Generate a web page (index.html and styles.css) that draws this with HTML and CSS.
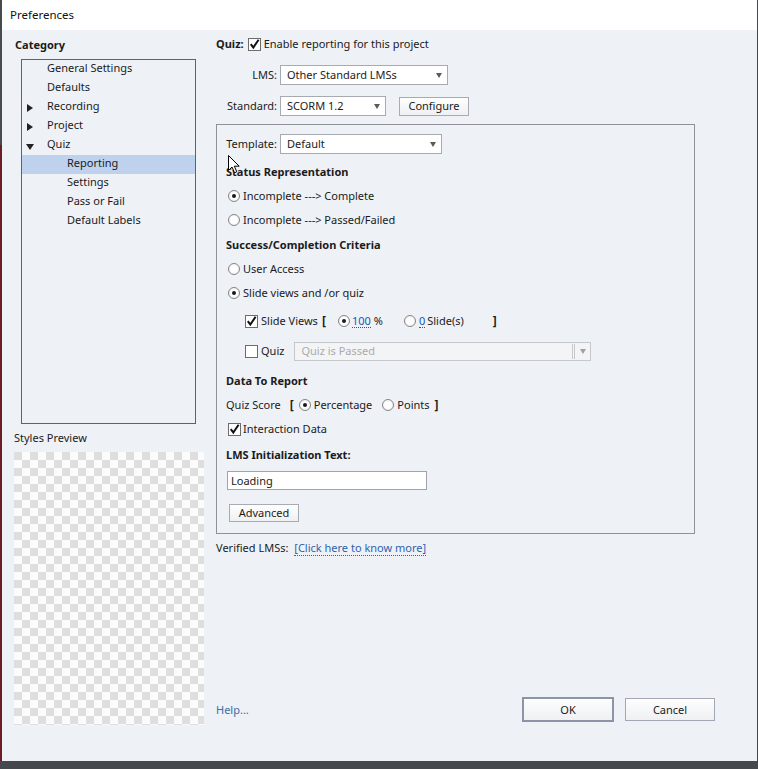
FILE: index.html
```html
<!DOCTYPE html>
<html>
<head>
<meta charset="utf-8">
<title>Preferences</title>
<link rel="stylesheet" href="styles.css">
</head>
<body>
<div class="window">
  <div class="titlebar">Preferences</div>
  <div class="main">
    <div class="left">
      <div class="cat-title">Category</div>
      <ul class="tree">
        <li class="item"><span class="tog"></span>General Settings</li>
        <li class="item"><span class="tog"></span>Defaults</li>
        <li class="item"><span class="tog"><i class="tri-r"></i></span>Recording</li>
        <li class="item"><span class="tog"><i class="tri-r"></i></span>Project</li>
        <li class="item"><span class="tog"><i class="tri-d"></i></span>Quiz</li>
        <li class="item l2 sel">Reporting</li>
        <li class="item l2">Settings</li>
        <li class="item l2">Pass or Fail</li>
        <li class="item l2">Default Labels</li>
      </ul>
      <div class="preview-label">Styles Preview</div>
      <div class="checker"></div>
    </div>

    <div class="right">
      <div class="row quiz-row">
        <span class="b">Quiz:</span>
        <span class="cb"><svg viewBox="0 0 11 11" width="11" height="11"><path d="M1.8 5.2 L4.3 8.6 L9.6 0.8" fill="none" stroke="#111" stroke-width="2"/></svg></span>
        <span>Enable reporting for this project</span>
      </div>
      <div class="row form-row lms">
        <span class="flabel">LMS:</span>
        <div class="select w168"><span>Other Standard LMSs</span><i class="arrow"></i></div>
      </div>
      <div class="row form-row std">
        <span class="flabel">Standard:</span>
        <div class="select w106"><span>SCORM 1.2</span><i class="arrow"></i></div>
        <button class="btn configure">Configure</button>
      </div>

      <div class="group">
        <div class="row tmpl">
          <span class="tlabel">Template:</span>
          <div class="select w162"><span>Default</span><i class="arrow"></i></div>
        </div>
        <div class="line heading first">Status Representation</div>
        <div class="line opt"><span class="radio on"></span>Incomplete ---&gt; Complete</div>
        <div class="line opt"><span class="radio"></span>Incomplete ---&gt; Passed/Failed</div>
        <div class="line heading h2">Success/Completion Criteria</div>
        <div class="line opt"><span class="radio"></span>User Access</div>
        <div class="line opt"><span class="radio on"></span>Slide views and /or quiz</div>
        <div class="line sub slide-row">
          <span class="cb"><svg viewBox="0 0 11 11" width="11" height="11"><path d="M1.8 5.2 L4.3 8.6 L9.6 0.8" fill="none" stroke="#111" stroke-width="2"/></svg></span>
          <span>Slide Views</span>
          <span class="br br-open">[</span>
          <span class="radio on r-pct"></span>
          <span class="num">100</span>
          <span class="pct">%</span>
          <span class="radio r-sl"></span>
          <span class="num num0">0</span>
          <span class="sl">Slide(s)</span>
          <span class="br br-close">]</span>
        </div>
        <div class="line sub quiz-sub">
          <span class="cb"></span>
          <span>Quiz</span>
          <div class="select disabled"><span>Quiz is Passed</span><span class="dd-end"><i class="sep"></i><i class="arrow"></i></span></div>
        </div>
        <div class="line heading h3">Data To Report</div>
        <div class="line score">
          <span>Quiz Score</span>
          <span class="br s-open">[</span>
          <span class="radio on s-r1"></span>
          <span class="s-t">Percentage</span>
          <span class="radio s-r2"></span>
          <span class="s-t">Points</span>
          <span class="br s-close">]</span>
        </div>
        <div class="line interact">
          <span class="cb"><svg viewBox="0 0 11 11" width="11" height="11"><path d="M1.8 5.2 L4.3 8.6 L9.6 0.8" fill="none" stroke="#111" stroke-width="2"/></svg></span>
          <span>Interaction Data</span>
        </div>
        <div class="line heading h4">LMS Initialization Text:</div>
        <div class="textfield">Loading</div>
        <button class="btn advanced">Advanced</button>

        <svg class="cursor" width="13" height="20" viewBox="0 0 13 20"><path d="M0.5 0.5 L0.5 15.5 L4 12 L6.6 17.8 L8.8 16.8 L6.3 11.2 L11.2 11.2 Z" fill="#fff" stroke="#000" stroke-width="1" stroke-linejoin="round"/></svg>
      </div>

      <div class="verified">Verified LMSs: <span class="link">[Click here to know more]</span></div>
      <div class="spacer"></div>
      <div class="footer">
        <span class="help">Help...</span>
        <div class="btns">
          <button class="btn ok">OK</button>
          <button class="btn cancel">Cancel</button>
        </div>
      </div>
    </div>
  </div>
</div>
</body>
</html>
```

FILE: styles.css
```css
* { box-sizing: border-box; margin: 0; padding: 0; }
html, body { width: 758px; height: 769px; overflow: hidden; }
body {
  background: linear-gradient(#4a4a4c 0 145px, #6a1c27 145px) 0 0 / 2px 761px no-repeat, #45484d;
  font-family: "Noto Sans", "DejaVu Sans", sans-serif;
  font-size: 11px;
  line-height: 16px;
  color: #1b1b1b;
}
.window {
  margin-left: 2px;
  width: 755px;
  height: 761px;
  background: #eef1f6;
  display: flex;
  flex-direction: column;
}
.titlebar {
  height: 30px;
  flex: none;
  background: #fff;
  padding-left: 8px;
  display: flex;
  align-items: center;
  font-size: 11.5px;
  color: #111;
}
.main {
  flex: 1;
  display: grid;
  grid-template-columns: 214px 499px;
}

/* left column */
.left { padding: 7px 0 0 12px; display: flex; flex-direction: column; }
.cat-title { font-weight: 700; margin-left: 1px; height: 16px; }
.tree {
  list-style: none;
  margin: 6px 0 0 7px;
  width: 175px;
  height: 365px;
  border: 1px solid #2d6db3;
}
.item { height: 19px; display: flex; align-items: center; padding-bottom: 3px; }
.item.sel { background: #bed2ee; }
.l2 { padding-left: 45px; }
.tog { width: 25px; height: 16px; padding-left: 5px; display: flex; align-items: center; flex: none; }
.tri-r {
  width: 0; height: 0;
  margin-top: 3px;
  border-left: 6px solid #222;
  border-top: 4px solid transparent;
  border-bottom: 4px solid transparent;
}
.tri-d {
  width: 0; height: 0;
  margin-left: -1px;
  margin-top: 5px;
  border-top: 6px solid #222;
  border-left: 4px solid transparent;
  border-right: 4px solid transparent;
}
.preview-label { margin-top: 6px; height: 16px; }
.checker {
  margin-top: 6px;
  width: 190px;
  height: 273px;
  background: repeating-conic-gradient(#fbfbfb 0 25%, #dedede 0 50%) 0 0 / 16px 16px;
}

/* right column */
.right { padding: 6px 0 39px 0; display: flex; flex-direction: column; }
.row { display: flex; align-items: center; }
.b { font-weight: 700; }
.quiz-row { height: 16px; }
.quiz-row .cb { margin: 0 3px 0 4px; }
.form-row { height: 20px; }
.lms { margin-top: 13px; }
.std { margin-top: 11px; }
.flabel { width: 64px; text-align: right; padding-right: 3px; }
.tlabel { width: 54px; text-align: right; padding-right: 3px; }
.select {
  height: 20px;
  border: 1px solid #a7aab3;
  background: #fff;
  display: flex;
  align-items: center;
  justify-content: space-between;
  padding: 0 5px 0 6px;
}
.w168 { width: 168px; }
.w106 { width: 106px; }
.w162 { width: 162px; }
.arrow {
  width: 0; height: 0;
  border-top: 5px solid #5a5a5a;
  border-left: 3.5px solid transparent;
  border-right: 3.5px solid transparent;
}
.btn {
  font: inherit;
  color: #1b1b1b;
  border: 1px solid #a8abb4;
  background: linear-gradient(#fefefe, #eff0f2);
  display: flex;
  align-items: center;
  justify-content: center;
}
.configure { width: 70px; height: 19px; margin-left: 13px; }

.group {
  position: relative;
  margin-top: 8px;
  width: 479px;
  height: 410px;
  border: 1px solid #8f9099;
  padding: 9px 0 0 9px;
}
.tmpl { height: 20px; }
.line { height: 24px; display: flex; align-items: center; }
.heading { font-weight: 700; }
.first { margin-top: 6px; }
.h2 { margin-top: 1px; }
.h3 { margin-top: 6px; }
.h4 { margin-top: 2px; }
.opt .radio { margin: 0 3px 0 2px; }

.radio {
  width: 12px; height: 12px;
  border-radius: 50%;
  border: 1px solid #858585;
  background: radial-gradient(#ffffff 40%, #e9e9e9);
  flex: none;
  display: flex;
  align-items: center;
  justify-content: center;
}
.radio.on::after {
  content: "";
  width: 4px; height: 4px;
  border-radius: 50%;
  background: #1a1a1a;
}
.cb {
  width: 13px; height: 13px;
  border: 1px solid #6c6c6c;
  background: #fff;
  flex: none;
  display: flex;
  align-items: center;
  justify-content: center;
}
.cb svg { display: block; }

.sub { padding-left: 19px; }
.slide-row { margin-top: 4px; }
.sub .cb { margin-right: 3px; }
.br { font-weight: 700; font-size: 12px; }
.br-open { margin-left: 4px; }
.r-pct { margin-left: 12px; }
.num {
  color: #2157b0;
  margin-left: 2px;
  line-height: 13px;
  border-bottom: 1px dotted #2157b0;
}
.pct { margin-left: 3px; }
.r-sl { margin-left: 21px; }
.num0 { margin-left: 3px; }
.sl { margin-left: 2px; }
.br-close { margin-left: 29px; }

.quiz-sub { margin-top: 6px; }
.select.disabled {
  width: 297px;
  height: 19px;
  margin-left: 10px;
  background: #f3f4f6;
  border-color: #c6c8ce;
  color: #ababab;
  padding-right: 4px;
}
.dd-end { display: flex; align-items: center; }
.sep {
  width: 3px; height: 15px;
  border-left: 1px solid #c8c8c8;
  border-right: 1px solid #c8c8c8;
  margin-right: 5px;
}
.select.disabled .arrow { border-top-color: #a0a0a0; }

.score .s-open { margin-left: 9px; }
.s-r1 { margin-left: 5px; }
.s-t { margin-left: 3px; }
.s-r2 { margin-left: 10px; }
.s-close { margin-left: 5px; }

.interact .cb { margin: 0 2px 0 2px; }

.textfield {
  margin: 4px 0 0 1px;
  width: 200px;
  height: 19px;
  border: 1px solid #a0a3ab;
  background: #fff;
  padding-left: 3px;
  display: flex;
  align-items: center;
}
.advanced { margin: 14px 0 0 3px; width: 70px; height: 18px; }

.cursor { position: absolute; left: 11px; top: 30px; }

.verified { margin-top: 6px; height: 16px; }
.link {
  margin-left: 3px;
  color: #2e63b0;
  border-bottom: 1px dotted #2e63b0;
}
.spacer { flex: 1; }
.footer { height: 25px; display: flex; align-items: center; justify-content: space-between; }
.help { color: #3b6ea8; }
.btns { display: flex; align-items: center; gap: 11px; }
.ok { width: 92px; height: 25px; border: 2px solid #8e94a7; }
.cancel { width: 90px; height: 23px; border-color: #a3a7b5; }
```
